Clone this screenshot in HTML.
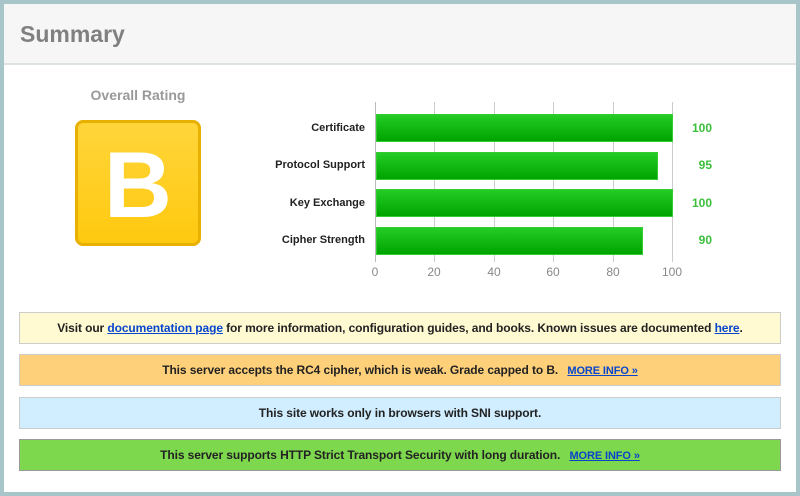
<!DOCTYPE html>
<html><head><style>
body{margin:0;width:800px;height:496px;background:#a8c6ca;font-family:"Liberation Sans",Arial,sans-serif;position:relative;overflow:hidden}
.card{position:absolute;left:4px;top:4px;width:792px;height:488px;background:#fff}
.hdr{position:absolute;left:0;top:0;width:792px;height:59px;background:#f6f6f6;border-bottom:2px solid #dde3e3}
.hdr span{position:absolute;left:16px;top:17px;font-size:23px;font-weight:bold;color:#808080}
.or{position:absolute;left:75px;width:126px;text-align:center;top:87px;font-size:14px;font-weight:bold;color:#999}
.grade{position:absolute;left:75px;top:120px;width:120px;height:120px;border:3px solid #e8b000;border-radius:8px;background:linear-gradient(#ffd53a,#ffc90f);color:#fff;font-size:94px;font-weight:bold;text-align:center;line-height:124px}
.lbl{position:absolute;right:435px;font-size:11px;font-weight:bold;color:#222;white-space:nowrap}
.bar{position:absolute;left:376px;height:26px;background:linear-gradient(#25cc25,#00a400);border:1px solid #3c3}
.val{position:absolute;left:688px;width:24px;text-align:right;font-size:12px;font-weight:bold;color:#3bbf3b}
.grid{position:absolute;top:102px;width:1px;height:160px;background:#ccc}
.ax{position:absolute;top:265px;font-size:12px;color:#888;width:30px;text-align:center}
.bn{position:absolute;left:19px;width:760px;height:30px;line-height:30px;text-align:center;font-size:12px;letter-spacing:-0.1px;color:#222;font-weight:bold;border:1px solid #ccc}
.bn a{color:#0645cc;text-decoration:underline}
.sm{font-size:11px;margin-left:6px}
</style></head><body>
<div class="card"></div>
<div style="position:absolute;left:4px;top:4px">
<div class="hdr"><span>Summary</span></div>
</div>
<div class="or">Overall Rating</div>
<div class="grade">B</div>
<div class="grid" style="left:375px;background:#bbb"></div>
<div class="grid" style="left:434px"></div>
<div class="grid" style="left:494px"></div>
<div class="grid" style="left:553px"></div>
<div class="grid" style="left:613px"></div>
<div class="grid" style="left:672px"></div>
<div class="ax" style="left:360px">0</div>
<div class="ax" style="left:419px">20</div>
<div class="ax" style="left:479px">40</div>
<div class="ax" style="left:538px">60</div>
<div class="ax" style="left:598px">80</div>
<div class="ax" style="left:657px">100</div>
<div class="lbl" style="top:122px">Certificate</div>
<div class="lbl" style="top:159px">Protocol Support</div>
<div class="lbl" style="top:197px">Key Exchange</div>
<div class="lbl" style="top:234px">Cipher Strength</div>
<div class="bar" style="top:114px;width:295px"></div>
<div class="bar" style="top:152px;width:280px"></div>
<div class="bar" style="top:189px;width:295px"></div>
<div class="bar" style="top:227px;width:265px"></div>
<div class="val" style="top:121px">100</div>
<div class="val" style="top:158px">95</div>
<div class="val" style="top:196px">100</div>
<div class="val" style="top:233px">90</div>
<div class="bn" style="top:312px;background:#fffad2">Visit our <a>documentation page</a> for more information, configuration guides, and books. Known issues are documented <a>here</a>.</div>
<div class="bn" style="top:354px;background:#ffd07a">This server accepts the RC4 cipher, which is weak. Grade capped to B. <a class="sm">MORE INFO »</a></div>
<div class="bn" style="top:397px;background:#d0eeff">This site works only in browsers with SNI support.</div>
<div class="bn" style="top:439px;background:#7ed84e;border-color:#999">This server supports HTTP Strict Transport Security with long duration. <a class="sm">MORE INFO »</a></div>
</body></html>
